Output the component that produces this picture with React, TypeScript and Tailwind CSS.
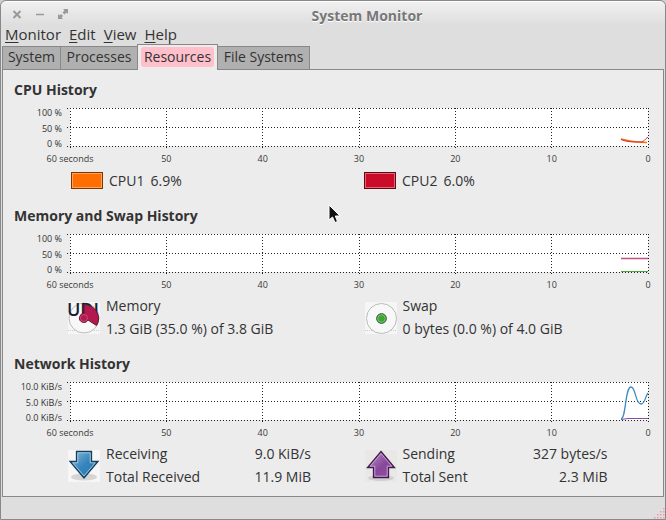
import type { ReactNode } from "react";

const menus = ["Monitor", "Edit", "View", "Help"];

const ticks = [
  { x: "0%", label: "60 seconds" },
  { x: "16.667%", label: "50" },
  { x: "33.333%", label: "40" },
  { x: "50%", label: "30" },
  { x: "66.667%", label: "20" },
  { x: "83.333%", label: "10" },
  { x: "100%", label: "0" },
];

function Chart({ scale, children }: { scale: string[]; children: ReactNode }) {
  return (
    <div className="mt-2 flex pr-[15px] text-[9px]">
      <div className="mr-2 flex h-10 w-12 shrink-0 flex-col justify-between text-right leading-[9px] whitespace-nowrap">
        {scale.map((s) => (
          <span key={s}>{s}</span>
        ))}
      </div>
      <svg className="h-14 min-w-0 flex-1 overflow-visible">
        <rect width="100%" height="38" fill="#fff" />
        <g stroke="#222" strokeDasharray="1 2" shapeRendering="crispEdges">
          {[0, 19, 38].map((y) => (
            <line key={y} x1="-3" x2="100%" y1={y + 0.5} y2={y + 0.5} />
          ))}
          {ticks.map((t) => (
            <line key={t.label} x1={t.x} x2={t.x} y1="0" y2="42" />
          ))}
        </g>
        {/* curves are plotted back from the "0 seconds" edge */}
        <svg x="100%" overflow="visible" fill="none">
          {children}
        </svg>
        <g fill="#3a3a3a" textAnchor="middle">
          {ticks.map((t) => (
            <text key={t.label} x={t.x} y="54">
              {t.label}
            </text>
          ))}
        </g>
      </svg>
    </div>
  );
}

function Section({ title, children }: { title: string; children: ReactNode }) {
  return (
    <section>
      <h2 className="h-5 text-[14px] leading-5 font-bold">{title}</h2>
      {children}
    </section>
  );
}

function Item({ icon, children }: { icon: ReactNode; children: ReactNode }) {
  return (
    <div className="flex items-center gap-[6px]">
      {icon}
      <div className="flex w-[205px] flex-col gap-[3px]">{children}</div>
    </div>
  );
}

function Row({ name, value }: { name: string; value?: string }) {
  return (
    <div className="flex h-5 justify-between leading-5 whitespace-nowrap">
      <span>{name}</span>
      {value && <span>{value}</span>}
    </div>
  );
}

function MemoryIcon() {
  return (
    <svg className="size-8 shrink-0 overflow-visible" viewBox="0 0 32 32">
      <rect width="32" height="32" fill="#f6f6f6" />
      <path d="M0 28.5H32" stroke="#ccc" strokeDasharray="1 1" />
      <circle cx="16" cy="16" r="15" fill="#f8f8f8" stroke="#bbb" />
      <text x="-1" y="14" fontSize="18" fontWeight="600" fill="#1b2030">UDI</text>
      <path d="M16 3A13.500 13.500 0 0 1 28.500 23.500L20 18A4.500 4.500 0 1 1 16 11.500Z" fill="#b3194f" stroke="#5f1733" />
      <circle cx="16" cy="16" r="3.500" fill="#b3194f" stroke="#d45c84" strokeWidth=".7" />
    </svg>
  );
}

function SwapIcon() {
  return (
    <svg className="size-8 shrink-0" viewBox="0 0 32 32">
      <rect width="32" height="32" fill="#f6f6f6" />
      <path d="M0 28.5H32" stroke="#ccc" strokeDasharray="1 1" />
      <circle cx="16.500" cy="16.500" r="15" fill="#f8f8f8" stroke="#bbb" />
      <circle cx="16.500" cy="16.500" r="4.800" fill="#3fa535" stroke="#24452a" />
      <circle cx="16.500" cy="16.500" r="3.800" fill="none" stroke="#8ccf80" strokeWidth=".8" />
    </svg>
  );
}

function ReceiveIcon() {
  return (
    <svg className="size-8 shrink-0" viewBox="0 0 32 32">
      <defs>
        <linearGradient id="down" x1="0" y1="0" x2="1" y2="1">
          <stop offset="0" stopColor="#8fbbd9" />
          <stop offset=".5" stopColor="#3585bd" />
          <stop offset="1" stopColor="#2874b0" />
        </linearGradient>
      </defs>
      <rect width="32" height="32" fill="#f6f6f6" />
      <ellipse cx="16" cy="27" rx="13" ry="3.500" fill="#d5d5d5" />
      <path d="M8.500 1.500H23.500V11.500H30L16 28L2 11.500H8.500Z" fill="url(#down)" stroke="#173f58" strokeWidth="1.300" />
      <path d="M9.800 2.800H22.200V12.800H27.200L16 26L4.800 12.800H9.800Z" fill="none" stroke="#a5cbe3" strokeWidth=".9" />
    </svg>
  );
}

function SendIcon() {
  return (
    <svg className="size-8 shrink-0" viewBox="0 0 32 32">
      <defs>
        <linearGradient id="up" x1="0" y1="0" x2="1" y2="1">
          <stop offset="0" stopColor="#bb96c8" />
          <stop offset=".55" stopColor="#88479b" />
          <stop offset="1" stopColor="#8e4ea1" />
        </linearGradient>
      </defs>
      <rect width="32" height="32" fill="#e9e8e7" />
      <ellipse cx="16" cy="28" rx="13" ry="3" fill="#d2d0ce" />
      <path d="M16 1.500L29.500 17.500H23.500V27.500H8.500V17.500H2.500Z" fill="url(#up)" stroke="#3f1b4b" strokeWidth="1.300" />
      <path d="M16 3.500L26.800 16.200H22.200V26.200H9.800V16.200H5.200Z" fill="none" stroke="#c9a6d3" strokeWidth=".9" />
    </svg>
  );
}

export default function App() {
  return (
    <div className="bg-[#cfcfcf]">
      <div className="relative flex min-h-screen flex-col rounded-t-md border border-[#888] bg-[#dedede] font-['Open_Sans','Noto_Sans',sans-serif] text-[14px] text-[#333]">
        <header className="flex h-6 items-center rounded-t-md border-t border-white bg-linear-to-b from-[#f0f0f0] to-[#dedede] pl-[10px] text-[#999]">
          <div className="flex w-[58px] gap-[11px]">
            <button aria-label="Close">
              <svg className="size-3" viewBox="0 0 12 12">
                <path d="M2.500 3L9.500 10M9.500 3L2.500 10" stroke="currentColor" strokeWidth="2" />
              </svg>
            </button>
            <button aria-label="Minimize">
              <svg className="size-3" viewBox="0 0 12 12">
                <path d="M2 6.500H10" stroke="currentColor" strokeWidth="1.500" />
              </svg>
            </button>
            <button aria-label="Maximize">
              <svg className="size-3" viewBox="0 0 12 12" fill="currentColor">
                <path d="M6 1H11V6L9.500 4.500L7.500 6.500L5.500 4.500L7.500 2.500ZM1 6L2.500 7.500L4 6L6 8L4.500 9.500L6 11H1Z" />
              </svg>
            </button>
          </div>
          <h1 className="mt-1 flex-1 text-center text-[14px] font-bold text-[#777] text-shadow-[0_1px_0_#fff]">
            System Monitor
          </h1>
        </header>

        <nav className="flex h-5 items-start gap-2 pl-1 text-[15px] leading-[18px]">
          {menus.map((m) => (
            <button key={m}>
              <span className="underline underline-offset-2">{m[0]}</span>
              {m.slice(1)}
            </button>
          ))}
        </nav>

        <div role="tablist" className="ml-px flex h-6 shrink-0 items-end leading-5">
          <button role="tab" className="h-[23px] w-[59px] border border-b-0 border-[#888] bg-[#b0b0b0] pb-[2px]">System</button>
          <button role="tab" className="h-[23px] w-[76px] border-t border-[#888] bg-[#b0b0b0] pb-[2px]">Processes</button>
          <button role="tab" aria-selected="true" className="z-10 -mb-px h-[26px] w-[81px] border border-b-0 border-[#888] bg-[#ececec] px-[3px] pb-[2px]">
            <span className="block rounded-[3px] bg-[#ffc0cb]">Resources</span>
          </button>
          <button role="tab" className="h-[23px] w-[92px] border-t border-r border-[#888] bg-[#b0b0b0] pb-[2px]">File Systems</button>
        </div>

        <main className="mx-px flex flex-col gap-[15px] border border-[#888] bg-[#ececec] pt-[10px] pb-[9px] pl-[11px]">
          <Section title="CPU History">
            <Chart scale={["100 %", "50 %", "0 %"]}>
              <path d="M-27 31C-18 33 -17 34 -1 34.500" stroke="#ff6e00" strokeWidth="1.500" />
              <path d="M-27 31.500C-19 35 -10 33.500 -7 34C-4 34 -3 31 0 29" stroke="#d32f3a" />
            </Chart>
            <div className="mt-[6px] ml-[57px] grid grid-cols-2 pr-[6px] pb-px">
              <div className="flex h-5 items-center gap-[6px]">
                <button aria-label="CPU1 color" className="h-[17px] w-8 border border-[#7a3500] bg-[#ff6e00] inset-ring inset-ring-[#ffa25c]" />
                <span>CPU1</span>
                <span>6.9%</span>
              </div>
              <div className="flex h-5 items-center gap-[6px]">
                <button aria-label="CPU2 color" className="h-[17px] w-8 border border-[#640713] bg-[#cb0c29] inset-ring inset-ring-[#e0667a]" />
                <span>CPU2</span>
                <span>6.0%</span>
              </div>
            </div>
          </Section>

          <Section title="Memory and Swap History">
            <Chart scale={["100 %", "50 %", "0 %"]}>
              <path d="M-27 24.500H0" stroke="#c05080" strokeWidth="1.500" />
              <path d="M-27 37.500H0" stroke="#49a835" />
            </Chart>
            <div className="mt-[6px] ml-[54px] grid grid-cols-2 pr-[2px]">
              <Item icon={<MemoryIcon />}>
                <Row name="Memory" />
                <Row name="1.3 GiB (35.0 %) of 3.8 GiB" />
              </Item>
              <Item icon={<SwapIcon />}>
                <Row name="Swap" />
                <Row name="0 bytes (0.0 %) of 4.0 GiB" />
              </Item>
            </div>
          </Section>

          <Section title="Network History">
            <Chart scale={["10.0 KiB/s", "5.0 KiB/s", "0.0 KiB/s"]}>
              <path d="M-27 37C-22 37 -23 5 -17 5C-12 5 -13 22 -7 22C-3 22 -3 15 0 11" stroke="#3d8ebf" strokeWidth="1.300" />
              <path d="M-27 37.500L-20 36.500H0" stroke="#8a4a9e" />
            </Chart>
            <div className="mt-[6px] ml-[54px] grid grid-cols-2 pr-[2px]">
              <Item icon={<ReceiveIcon />}>
                <Row name="Receiving" value="9.0 KiB/s" />
                <Row name="Total Received" value="11.9 MiB" />
              </Item>
              <Item icon={<SendIcon />}>
                <Row name="Sending" value="327 bytes/s" />
                <Row name="Total Sent" value="2.3 MiB" />
              </Item>
            </div>
          </Section>
        </main>

        <footer className="flex flex-1 items-end justify-end">
          <svg className="size-3" viewBox="0 0 12 12" fill="#ee9aa5">
            {[0, 1, 2, 3].map((r) =>
              Array.from({ length: r + 1 }, (_, c) => (
                <rect key={`${r}-${c}`} x={10 - c * 3} y={1 + r * 3} width="1.500" height="1.500" />
              ))
            )}
          </svg>
        </footer>

        {/* mouse pointer */}
        <svg className="absolute top-[203px] left-[327px] h-5 w-[13px]" viewBox="0 0 13 20">
          <path d="M1 1V16L4.500 13L7 18.500L9.500 17.500L7.300 12H12Z" fill="#111" stroke="#fff" />
        </svg>
      </div>
    </div>
  );
}
